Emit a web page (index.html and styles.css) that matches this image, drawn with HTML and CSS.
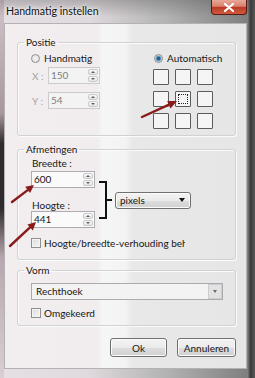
FILE: index.html
```html
<!DOCTYPE html>
<html lang="nl">
<head>
    <meta charset="UTF-8">
    <title>Handmatig instellen</title>
    <link rel="stylesheet" href="styles.css">
</head>
<body>
<div class="window">
    <div class="titlebar">
        <span class="title">Handmatig instellen</span>
        <div class="close">
            <svg width="12" height="9" viewBox="0 0 12 9"><path d="M2 1 L10 8 M10 1 L2 8" stroke="#fff" stroke-width="2.2" stroke-linecap="round"/></svg>
        </div>
    </div>

    <div class="client">
        <fieldset class="group group-positie">
            <legend>Positie</legend>
            <div class="pos-cols">
                <div class="pos-left">
                    <label class="radio"><span class="radio-dot"></span>Handmatig</label>
                    <div class="coord-row">
                        <span class="coord-label">X :</span>
                        <div class="spin disabled">
                            <span class="spin-value">150</span>
                            <span class="spin-btns"><i class="up"></i><i class="down"></i></span>
                        </div>
                    </div>
                    <div class="coord-row second">
                        <span class="coord-label">Y :</span>
                        <div class="spin disabled">
                            <span class="spin-value">54</span>
                            <span class="spin-btns"><i class="up"></i><i class="down"></i></span>
                        </div>
                    </div>
                </div>
                <div class="pos-right">
                    <label class="radio"><span class="radio-dot checked"></span>Automatisch</label>
                    <div class="anchor-grid">
                        <span class="cell"></span><span class="cell"></span><span class="cell"></span>
                        <span class="cell"></span><span class="cell focus"></span><span class="cell"></span>
                        <span class="cell"></span><span class="cell"></span><span class="cell"></span>
                    </div>
                </div>
            </div>
        </fieldset>

        <fieldset class="group group-afm">
            <legend>Afmetingen</legend>
            <div class="afm-body">
                <div class="afm-row">
                    <div class="afm-left">
                        <div class="field-label">Breedte :</div>
                        <div class="spin">
                            <span class="spin-value">600</span>
                            <span class="spin-btns"><i class="up"></i><i class="down"></i></span>
                        </div>
                        <div class="field-label second">Hoogte :</div>
                        <div class="spin tight">
                            <span class="spin-value">441</span>
                            <span class="spin-btns"><i class="up"></i><i class="down"></i></span>
                        </div>
                    </div>
                    <div class="afm-unit">
                        <span class="bracket"></span>
                        <div class="select-btn"><span>pixels</span><span class="arrow-down"></span></div>
                    </div>
                </div>
                <label class="check-row"><span class="check"></span><span class="check-text">Hoogte/breedte-verhouding behouden</span></label>
            </div>
        </fieldset>

        <fieldset class="group group-vorm">
            <legend>Vorm</legend>
            <div class="vorm-body">
                <div class="combo">
                    <span class="combo-value">Rechthoek</span>
                    <span class="combo-arrow"><span class="arrow-down small"></span></span>
                </div>
                <label class="check-row"><span class="check"></span><span>Omgekeerd</span></label>
            </div>
        </fieldset>

        <div class="buttons">
            <button class="btn btn-ok">Ok</button>
            <button class="btn btn-cancel">Annuleren</button>
        </div>
    </div>

    <!-- red annotation arrows drawn over the dialog -->
    <svg class="arrows" width="255" height="378" viewBox="0 0 255 378">
        <g stroke="#8a1b1b" stroke-width="2.4" stroke-linecap="round" fill="none">
            <path d="M142 117 L169 104.7"/>
            <path d="M12 202 L28 189.9"/>
            <path d="M10 246 L30 227.4"/>
        </g>
        <g fill="#8a1b1b">
            <polygon points="177,101 170.5,108.4 167.2,101.1"/>
            <polygon points="34,185 30.1,193.1 25.2,186.7"/>
            <polygon points="36,222 32.8,230.4 27.4,224.5"/>
        </g>
    </svg>
</div>
</body>
</html>
```

FILE: styles.css
```css
* {
    box-sizing: border-box;
}

body {
    margin: 0;
    background: #2b2b2b;
    font-family: Lato, "Noto Sans", "Liberation Sans", sans-serif;
    font-size: 10px;
    color: #161616;
}

.window {
    position: relative;
    width: 255px;
    height: 378px;
    display: flex;
    flex-direction: column;
    overflow: hidden;
    background:
        linear-gradient(to bottom, #d3c3cc 0, #a8979f 30%, #2f2a2c 38%, #2f2a2c 55%, #b7a6af 68%, #dacfd5 100%) no-repeat 0 0 / 4px 100%,
        linear-gradient(to right, #8d8d8d, #3a3a3a 45%, #5a5a5a 100%) no-repeat 100% 0 / 8px 100%,
        linear-gradient(to right, #e6dfe3 0%, #e0d9dd 35%, #b3b3b3 65%, #7a7a7a 100%);
}

.titlebar {
    height: 23px;
    flex-shrink: 0;
    display: flex;
    align-items: flex-start;
    justify-content: space-between;
    padding-left: 6px;
    background: linear-gradient(to bottom, rgba(70, 70, 70, 0.3), rgba(255, 255, 255, 0) 75%);
}

.title {
    line-height: 23px;
    font-size: 10.6px;
    color: #111;
    text-shadow: 0 0 5px #fff, 0 0 3px #fff;
}

.close {
    width: 36px;
    height: 15px;
    margin-right: 8px;
    border: 1px solid #5a1a12;
    border-top: 0;
    border-radius: 0 0 4px 4px;
    background: linear-gradient(to bottom, #e9a89a 0%, #d9806c 45%, #bb3a25 52%, #cf5a40 100%);
    display: flex;
    align-items: center;
    justify-content: center;
}

.client {
    flex: 1;
    margin: 0 8px 9px 4px;
    border: 1px solid #b3b3b3;
    display: flex;
    flex-direction: column;
    background: linear-gradient(to right, #f2eef0 0, #f1edef 92px, #f6f6f6 98px, #f3f3f3 120px, #e8e8e8 128px, #e6e6e6 100%);
}

/* group boxes */
.group {
    margin: 0 10px 0 12px;
    padding: 0;
    min-width: 0;
    border: 1px solid #cfd3d6;
    border-radius: 3px;
    box-shadow: inset 1px 1px 0 #fbfbfb, 1px 1px 0 #fbfbfb;
}

.group legend {
    margin-left: 6px;
    padding: 0 2px;
    line-height: 12px;
}

.group-positie {
    margin-top: 12px;
}

.group-afm {
    margin-top: 7px;
}

.group-vorm {
    margin-top: 4px;
}

/* positie */
.pos-cols {
    display: flex;
    padding: 4px 0 6px 13px;
}

.pos-left {
    width: 123px;
}

.radio {
    display: flex;
    align-items: center;
    gap: 4px;
    height: 12px;
    line-height: 12px;
}

.radio-dot {
    width: 9px;
    height: 9px;
    border-radius: 50%;
    border: 1px solid #8e8f8f;
    background: radial-gradient(circle, #f4f4f4 0, #dcdcdc 100%);
}

.radio-dot.checked {
    background: radial-gradient(circle, #1f4e6e 0, #2f6a91 1.5px, #7fb0cf 2.6px, #e2ebf1 3.5px);
}

.coord-row {
    display: flex;
    align-items: center;
    margin-top: 3px;
}

.coord-row.second {
    margin-top: 8px;
}

.coord-label {
    width: 17px;
    padding-left: 1px;
    color: #a3a3a3;
}

.spin {
    display: flex;
    align-items: stretch;
    width: 52px;
    height: 17px;
    margin-top: 2px;
    border: 1px solid #abadb3;
    background: #fafafa;
}

.coord-row .spin {
    margin-top: 0;
}

.spin.tight {
    margin-top: 0;
}

.spin.disabled {
    border-color: #c9cbcf;
    background: #f3f3f3;
    color: #7f7f7f;
}

.spin-value {
    flex: 1;
    padding-left: 2px;
    line-height: 15px;
}

.spin-btns {
    width: 11px;
    display: flex;
    flex-direction: column;
    gap: 1px;
    padding: 1px 1px 1px 0;
}

.spin-btns i {
    flex: 1;
    display: flex;
    align-items: center;
    justify-content: center;
    border: 1px solid #cacaca;
    border-radius: 2px;
    background: linear-gradient(#f8f8f8, #e4e4e4);
}

.spin-btns .up::after {
    content: "";
    border: 2px solid transparent;
    border-top: 0;
    border-bottom-color: #606060;
}

.spin-btns .down::after {
    content: "";
    border: 2px solid transparent;
    border-bottom: 0;
    border-top-color: #606060;
}

.anchor-grid {
    display: grid;
    grid-template-columns: repeat(3, 16px);
    grid-auto-rows: 16px;
    gap: 6px;
    margin-top: 5px;
    margin-left: -1px;
}

.cell {
    display: flex;
    border: 1px solid #5c5c5c;
    border-radius: 1px;
    background: #f5f5f5;
}

.cell.focus {
    padding: 2px;
}

.cell.focus::after {
    content: "";
    flex: 1;
    border: 1px dotted #222;
}

/* afmetingen */
.afm-body {
    padding: 2px 0 9px 13px;
}

.afm-row {
    display: flex;
    align-items: flex-start;
}

.afm-left {
    width: 64px;
}

.afm-left .spin {
    width: 64px;
}

.field-label {
    line-height: 12px;
    padding-left: 1px;
}

.field-label.second {
    margin-top: 11px;
}

.afm-unit {
    display: flex;
    align-items: center;
    margin: 24px 0 0 4px;
}

.bracket {
    width: 8px;
    height: 38px;
    border: 2px solid #111;
    border-left: 0;
    display: flex;
    align-items: center;
}

.bracket::after {
    content: "";
    flex-shrink: 0;
    width: 5px;
    height: 2px;
    margin-left: 8px;
    background: #111;
}

.select-btn {
    width: 76px;
    height: 17px;
    margin-left: 8px;
    display: flex;
    align-items: center;
    justify-content: space-between;
    padding: 0 5px 0 4px;
    border: 1px solid #707070;
    border-radius: 3px;
    background: linear-gradient(to bottom, #f3f3f3 0, #ebebeb 50%, #dedede 51%, #d0d0d0 100%);
    box-shadow: inset 0 0 0 1px #fbfbfb;
}

.arrow-down {
    border: 3.5px solid transparent;
    border-bottom: 0;
    border-top: 4px solid #111;
}

.arrow-down.small {
    border-width: 2.5px;
    border-bottom: 0;
    border-top: 3px solid #6a6a6a;
}

.check-row {
    display: flex;
    align-items: center;
    gap: 3px;
    height: 14px;
    line-height: 14px;
    margin-top: 8px;
}

.check {
    width: 10px;
    height: 10px;
    flex-shrink: 0;
    border: 1px solid #8f8f8f;
    background: linear-gradient(135deg, #dcdcdc, #f6f6f6);
    box-shadow: inset 0 0 0 1px #f4f4f4;
}

.check-text {
    max-width: 141px;
    overflow: hidden;
    white-space: nowrap;
}

/* vorm */
.vorm-body {
    padding: 7px 0 5px 13px;
}

.vorm-body .check-row {
    margin-top: 6px;
}

.combo {
    display: flex;
    width: 192px;
    height: 17px;
    border: 1px solid #a9abb0;
    background: #f3f3f3;
}

.combo-value {
    flex: 1;
    padding-left: 4px;
    line-height: 15px;
}

.combo-arrow {
    width: 14px;
    display: flex;
    align-items: center;
    justify-content: center;
    border: 1px solid #cdcdcd;
    background: #e2e2e2;
}

/* buttons */
.buttons {
    display: flex;
    justify-content: flex-end;
    gap: 10px;
    margin-top: 12px;
    padding-right: 10px;
}

.btn {
    height: 19px;
    padding: 0;
    font: inherit;
    color: #161616;
    border: 1px solid #707070;
    border-radius: 3px;
    background: linear-gradient(to bottom, #f3f3f3 0, #ebebeb 50%, #dedede 51%, #d0d0d0 100%);
    box-shadow: inset 0 0 0 1px #fbfbfb;
}

.btn-ok {
    width: 57px;
}

.btn-cancel {
    width: 59px;
}

.arrows {
    position: absolute;
    left: 0;
    top: 0;
    pointer-events: none;
}
```
